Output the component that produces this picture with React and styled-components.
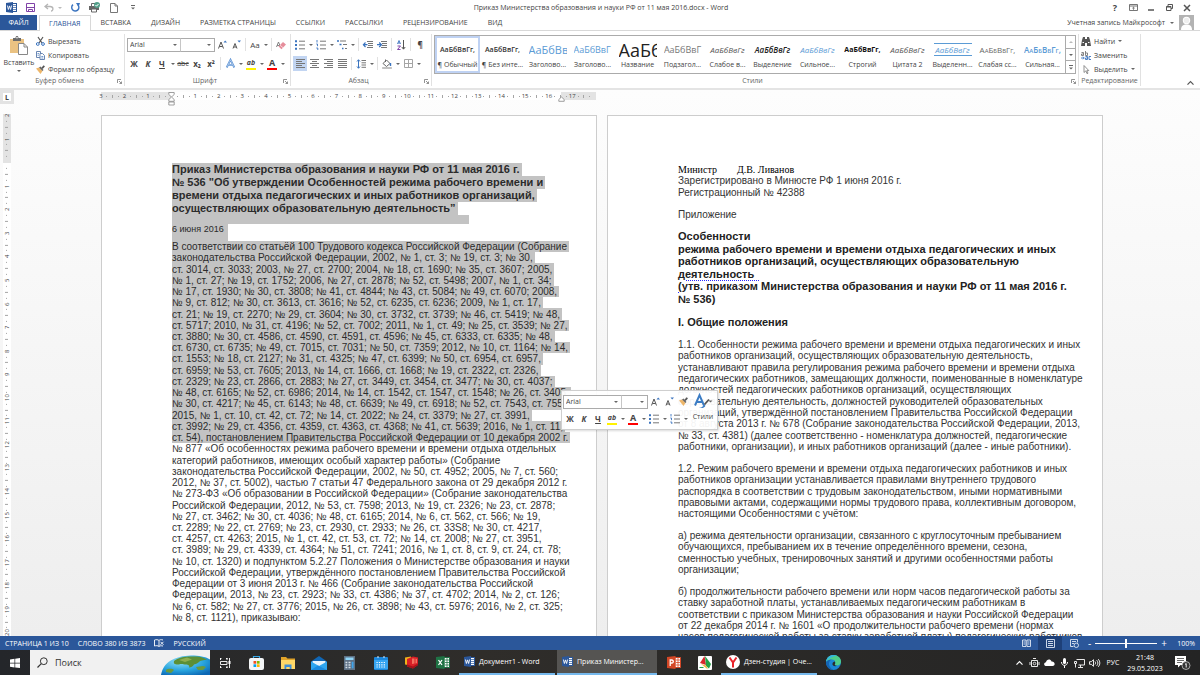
import React from 'react';
import styled, { createGlobalStyle, css } from 'styled-components';

const GlobalStyle = createGlobalStyle`
  * { box-sizing: border-box; }
  body {
    margin: 0;
    background: #fff;
    color: #444;
    font-family: "Open Sans", "Noto Sans", sans-serif;
    font-size: 7px;
  }
  button, input, select {
    font: inherit;
    color: inherit;
    border: 0;
    margin: 0;
    padding: 0;
    background: none;
  }
  svg { display: block; flex: none; overflow: visible; }
`

const Window = styled.div`
  display: flex;
  flex-direction: column;
  height: 100vh;
  overflow: hidden;
`

/* ---------- title bar and tabs ---------- */

const TitleBar = styled.header`
  display: grid;
  grid-template-columns: 1fr auto 1fr;
  align-items: center;
  height: 15px;
  padding: 0 4px 0 6px;
`
const QuickAccess = styled.div`
  display: flex;
  align-items: center;
  gap: 8px;
`
const QuickButton = styled.button`
  display: flex;
  align-items: center;
  justify-content: center;
  gap: 4px;
  min-width: 11px;
`
const Title = styled.h1`
  margin: 0;
  font-size: 7px;
  font-weight: 400;
  white-space: nowrap;
`
const WindowButtons = styled.div`
  display: flex;
  justify-content: flex-end;
`
const WindowButton = styled.button`
  display: flex;
  align-items: center;
  justify-content: center;
  width: 18px;
  height: 14px;
  font-size: 9px;
  font-weight: 700;
`
const TabBar = styled.nav`
  display: flex;
  align-items: stretch;
  height: 16px;
  border-bottom: 1px solid #d8d8d8;
`
const FileTab = styled.button`
  width: 37px;
  margin-right: 2px;
  background: #2b579a;
  color: #fff;
`
const Tab = styled.button`
  padding: 0 10px;
  white-space: nowrap;
  ${props => props.$active && css`
    margin-bottom: -1px;
    padding: 0 9px;
    border: 1px solid #d8d8d8;
    border-bottom: 0;
    background: #fff;
    color: #2b579a;
  `}
`
const Account = styled.button`
  display: flex;
  align-items: center;
  gap: 5px;
  margin-left: auto;
  padding-right: 6px;
  white-space: nowrap;
`

/* ---------- ribbon ---------- */

const Ribbon = styled.div`
  display: flex;
  flex: none;
  height: 59px;
  padding: 3px 0 2px;
  border-bottom: 2px solid #e4e4e4;
`
const Group = styled.section`
  display: flex;
  flex-direction: column;
  flex: ${props => props.$grow ? "1" : "none"};
  width: ${props => props.$width ? `${props.$width}px` : "auto"};
  min-width: 0;
  padding: 0 2px;
  border-right: 1px solid #e1e1e1;
`
const GroupBody = styled.div`
  display: flex;
  flex-direction: ${props => props.$column ? "column" : "row"};
  flex: 1;
  gap: ${props => props.$column ? "4px" : "0"};
  padding-top: ${props => props.$column ? "3px" : "0"};
`
const GroupFooter = styled.div`
  display: flex;
  align-items: center;
  height: 10px;
`
const GroupName = styled.h2`
  flex: 1;
  margin: 0;
  font-size: 7px;
  font-weight: 400;
  line-height: 10px;
  text-align: center;
  white-space: nowrap;
  color: #666;
`
const Paste = styled.button`
  display: flex;
  flex-direction: column;
  align-items: center;
  gap: 3px;
  width: 34px;
  padding-top: 2px;
`
const CommandList = styled.div`
  display: flex;
  flex-direction: column;
`
const Command = styled.button`
  display: flex;
  align-items: center;
  gap: 3px;
  height: 14px;
  white-space: nowrap;
`
const ToolRow = styled.div`
  display: flex;
  align-items: center;
  height: 15px;
`
const Tool = styled.button`
  display: flex;
  align-items: center;
  justify-content: center;
  width: 14px;
  height: 15px;
  font-size: ${props => props.$small ? 7 : 8}px;
  font-weight: ${props => props.$bold ? 700 : 400};
  font-style: ${props => props.$italic ? "italic" : "normal"};
  text-decoration: ${props => props.$underline ? "underline" : "none"};
  background: ${props => props.$active ? "#c2d5f2" : "none"};
`
const Drop = styled.button`
  display: flex;
  align-items: center;
  justify-content: center;
  width: 7px;
  height: 15px;
`
const Divider = styled.span`
  width: 1px;
  height: 13px;
  margin: 0 2px;
  background: #e1e1e1;
`
const Combo = styled.label`
  display: flex;
  align-items: center;
  width: ${props => props.$width}px;
  height: 14px;
  padding-right: 3px;
  border: 1px solid #ababab;
  background: #fff;
  & + & { border-left-color: #c6c6c6; margin-left: -1px; }
`
const Select = styled.select`
  flex: 1;
  min-width: 0;
  appearance: none;
  padding-left: 2px;
  outline: 0;
`

/* ---------- styles gallery ---------- */

const Gallery = styled.div`
  display: flex;
  flex: 1;
  height: 39px;
  min-width: 0;
  margin-top: 1px;
  border: 1px solid #ababab;
`
const StyleItem = styled.button`
  display: flex;
  flex-direction: column;
  flex: 1;
  min-width: 0;
  align-items: center;
  justify-content: flex-end;
  padding-bottom: 3px;
  overflow: hidden;
  outline: ${props => props.$active ? "2px solid #bfd2f3" : "0"};
  outline-offset: -2px;
`
const Sample = styled.span`
  display: flex;
  align-items: center;
  justify-content: ${props => props.$big ? "flex-start" : "center"};
  width: 38px;
  height: ${props => props.$lined ? "13px" : "19px"};
  margin-bottom: ${props => props.$lined ? "4px" : "1px"};
  overflow: hidden;
  white-space: nowrap;
  font-size: ${props => props.$size || 8}px;
  color: ${props => props.$color || "#555"};
  font-weight: ${props => props.$weight || 400};
  font-style: ${props => props.$italic ? "italic" : "normal"};
  font-variant: ${props => props.$caps ? "small-caps" : "normal"};
  border: solid #5b9bd5;
  border-width: ${props => props.$lined ? "1px 0" : "0"};
`
const StyleName = styled.span`
  white-space: nowrap;
  line-height: 10px;
`
const GalleryScroll = styled.div`
  display: flex;
  flex-direction: column;
  width: 10px;
  border-left: 1px solid #ababab;
  button {
    display: flex;
    flex: 1;
    align-items: center;
    justify-content: center;
  }
  button + button { border-top: 1px solid #ababab; }
`

/* ---------- document area ---------- */

const Canvas = styled.main`
  display: flex;
  flex-direction: column;
  flex: 1;
  min-height: 0;
  overflow: hidden;
  background: linear-gradient(#fdfdfd, #eeeeee);
`
const CanvasRow = styled.div`
  display: grid;
  grid-template-columns: 14px 1fr;
  flex: ${props => props.$grow ? "1" : "none"};
  min-height: 0;
`
const Sheets = styled.div`
  display: grid;
  grid-template-columns: 496px 496px;
  justify-content: center;
  gap: 10px;
  padding-right: 10px;
  padding-top: ${props => props.$top || 0}px;
`
const TabStop = styled.button`
  width: 14px;
  height: 14px;
  border: 3px solid #e3e3e3;
  background: #fff;
  font-size: 7px;
  line-height: 7px;
  font-weight: 700;
`
const HorizontalRuler = styled.div`
  position: relative;
  display: flex;
  width: 501px;
  height: 8px;
  margin: 2px 0 0 -3px;
  background: linear-gradient(90deg, #fdfdfd 3px, #e3e3e3 3px, #e3e3e3 73px, #fff 73px, #fff 463px, #e3e3e3 463px, #e3e3e3 498px, #fdfdfd 498px);
`
const VerticalRuler = styled.div`
  display: flex;
  flex-direction: column;
  width: 8px;
  height: 524px;
  margin: 8px 0 0 3px;
  background: linear-gradient(#fcfcfc 2px, #e3e3e3 2px, #e3e3e3 51px, #fff 51px);
`
const Mark = styled.span`
  display: flex;
  flex: 1 1 0;
  min-width: 0;
  min-height: 0;
  align-items: center;
  justify-content: center;
  font-size: 6px;
  line-height: 6px;
  color: #444;
  ${props => props.$vertical && css`
    writing-mode: vertical-rl;
    transform: rotate(180deg);
  `}
`
const Tick = styled.i`
  width: ${props => props.$wide ? 3 : 1}px;
  height: ${props => props.$tall ? 3 : 1}px;
  background: #a5a5a5;
`
const Indent = styled.span`
  position: absolute;
  top: 0;
  left: ${props => props.$at}px;
`
const Sheet = styled.article`
  position: relative;
  padding: ${props => props.$top}px 70px 0;
  border: 1px solid #cdcdcd;
  border-bottom: 0;
  background: #fff;
  color: #333;
  font-family: "Liberation Sans", Arial, sans-serif;
  font-size: 10px;
`
const Block = styled.div`
  display: flex;
  flex-direction: column;
  align-items: flex-start;
  height: ${props => props.$height}px;
  margin-bottom: ${props => props.$after || 0}px;
`
const Line = styled.span`
  display: flex;
  flex: 1 1 0;
  min-height: 0;
  align-items: center;
  white-space: pre;
  padding-right: 2px;
  background: ${props => props.$marked ? "#c3c3c3" : "none"};
  color: ${props => props.$marked ? "#2b2b2b" : "inherit"};
`
const Heading = styled(Block).attrs({ as: "h2" })`
  margin-top: 0;
  font-size: 11px;
  font-weight: 700;
  color: #222;
  ${Line} { padding-bottom: 2px; }
`
const HeadingTail = styled.span`
  width: 297px;
  height: 9px;
  background: #c3c3c3;
`
const Dated = styled(Block)`
  font-size: 9px;
  ${Line} { align-items: flex-start; }
`
const Signature = styled(Block)`
  font-family: "Liberation Serif", "Times New Roman", serif;
  color: #000;
`
const Grammar = styled.u`
  text-decoration: underline dotted #2a2aff 1px;
  text-underline-offset: 2px;
`

/* ---------- mini toolbar ---------- */

const MiniToolbar = styled.div`
  position: absolute;
  z-index: 3;
  top: 274px;
  left: 459px;
  display: flex;
  width: 157px;
  height: 40px;
  padding: 3px 1px;
  border: 1px solid #cfcfcf;
  background: rgba(255, 255, 255, 0.94);
  box-shadow: 1px 1px 2px rgba(0, 0, 0, 0.15);
  color: #444;
  font-family: "Open Sans", "Noto Sans", sans-serif;
  font-size: 7px;
`
const MiniTools = styled.div`
  display: flex;
  flex-direction: column;
  gap: 2px;
`
const MiniStyles = styled.button`
  display: flex;
  flex: 1;
  flex-direction: column;
  align-items: center;
  gap: 4px;
`

/* ---------- status bar ---------- */

const StatusBar = styled.footer`
  display: flex;
  flex: none;
  align-items: center;
  height: 14px;
  padding: 0 5px;
  background: #2b579a;
  color: #fff;
`
const StatusItem = styled.button`
  display: flex;
  align-items: center;
  margin-right: 9px;
`
const Views = styled.div`
  display: flex;
  align-self: stretch;
  margin-left: auto;
`
const View = styled.button`
  display: flex;
  align-items: center;
  justify-content: center;
  width: 24px;
  background: ${props => props.$active ? "#1e4078" : "none"};
`
const Zoom = styled.label`
  display: flex;
  align-items: center;
  gap: 4px;
  margin-left: 2px;
  font-size: 10px;
`
const ZoomSlider = styled.input`
  width: 62px;
  height: 12px;
  appearance: none;
  background: linear-gradient(#fff, #fff) center / 100% 1px no-repeat;
  &::-webkit-slider-thumb {
    appearance: none;
    width: 2px;
    height: 9px;
    background: #fff;
  }
`
const ZoomValue = styled.button`
  width: 28px;
  text-align: right;
`

/* ---------- taskbar ---------- */

const Taskbar = styled.div`
  display: flex;
  flex: none;
  align-items: stretch;
  height: 25px;
  background: linear-gradient(90deg, #24262a, #2f2d2a 40%, #242424);
  color: #fff;
`
const TaskIcon = styled.button`
  display: flex;
  align-items: center;
  justify-content: center;
  width: ${props => props.$width || 31}px;
`
const SearchBox = styled.label`
  display: flex;
  align-items: center;
  gap: 7px;
  width: 180px;
  padding-left: 7px;
  overflow: hidden;
  background: #f1f1f1;
  color: #333;
`
const SearchInput = styled.input`
  flex: 1;
  min-width: 0;
  outline: 0;
  font-size: 9px;
  &::placeholder { color: #333; opacity: 1; }
`
const TaskButton = styled.button`
  display: flex;
  align-items: center;
  gap: 4px;
  width: ${props => props.$active ? 100 : 96}px;
  margin: 0 1px;
  padding-left: 5px;
  white-space: nowrap;
  background: ${props => props.$active ? "#555452" : "none"};
  border-bottom: 2px solid #76b9ed;
`
const Tray = styled.div`
  display: flex;
  align-items: center;
  margin-left: auto;
`
const TrayItem = styled.button`
  display: flex;
  align-items: center;
  justify-content: center;
  width: ${props => props.$width || 15}px;
`
const Clock = styled.time`
  width: 42px;
  line-height: 11px;
  text-align: center;
`

/* ---------- icons ---------- */

const Svg = ({ w, h, children }) => (
  <svg width={w} height={h} viewBox={`0 0 ${w} ${h}`} fill="none" aria-hidden="true">{children}</svg>
)
const Caret = ({ color = "#666" }) => <Svg w={4} h={2}><path d="M0 0h4L2 2z" fill={color}/></Svg>

const WordIcon = () => (
  <Svg w={11} h={11}>
    <rect x="5.5" y="1.5" width="5" height="8" fill="#fff" stroke="#2b579a"/>
    <path d="M7 3.5h3M7 5.5h3M7 7.5h3" stroke="#2b579a" strokeWidth=".7"/>
    <path d="M0 1l7-1v11l-7-1z" fill="#2b579a"/>
    <path d="M1.4 3.5l1 4 1.1-3.6 1.1 3.6 1-4" stroke="#fff" strokeWidth=".9"/>
  </Svg>
)
const SaveIcon = () => (
  <Svg w={9} h={9}>
    <path d="M.5.5h8v8h-8z" stroke="#8043a8"/>
    <path d="M1 4.5h7" stroke="#8043a8"/>
    <path d="M2.5 9V6.5h4V9" stroke="#8043a8"/>
  </Svg>
)
const UndoIcon = () => (
  <Svg w={10} h={9}>
    <path d="M4 1L1 3.5 4 6M1 3.5h5c4 0 3.500 4.500 1 4.500" stroke="#b5b5b5" strokeWidth="1.300"/>
  </Svg>
)
const RedoIcon = () => (
  <Svg w={9} h={9}>
    <path d="M2 1.600A3.600 3.600 0 1 0 7 2" stroke="#3b74bf" strokeWidth="1.400"/>
    <path d="M5 0h4L7.500 4z" fill="#3b74bf"/>
  </Svg>
)
const PrintIcon = () => (
  <Svg w={11} h={11}>
    <path d="M0 4h10v4H0z" fill="#666"/>
    <path d="M2.500 4V1.500h4M2.500 7h5v3h-5z" stroke="#666" fill="#fff"/>
    <circle cx="8" cy="3" r="3" fill="#53a08a"/>
    <path d="M6.500 3l1 1.200L9.500 2" stroke="#fff"/>
  </Svg>
)
const BlankIcon = () => <Svg w={8} h={10}><path d="M.5.5h4.500l2.500 2.500v6.500h-7zM5 .5V3h2.500" stroke="#777"/></Svg>
const CustomizeIcon = () => <Svg w={4} h={5}><path d="M0 .5h4" stroke="#666"/><path d="M0 2.500h4L2 4.500z" fill="#666"/></Svg>
const RibbonOptionsIcon = () => (
  <Svg w={9} h={7}>
    <path d="M.5.5h8v6h-8zM.5 2h8" stroke="#666" strokeWidth=".9"/><path d="M4.500 5.800V3.200M3.300 4.300l1.200-1.100 1.200 1.100" stroke="#666" strokeWidth=".8"/>
  </Svg>
)
const MinimizeIcon = () => <Svg w={6} h={6}><path d="M0 5h6" stroke="#555" strokeWidth="1.500"/></Svg>
const RestoreIcon = () => <Svg w={7} h={7}><path d="M.5 2.500h4.500v4h-4.500zM2 2.500v-2h4.500v4H5M.5 3h4.500" stroke="#555"/></Svg>
const CloseIcon = () => <Svg w={6} h={6}><path d="M0 0l6 6M6 0L0 6" stroke="#555" strokeWidth="1.500"/></Svg>
const AvatarIcon = () => (
  <Svg w={15} h={15}>
    <path d="M0 0h15v15H0z" fill="#b3b3b3"/>
    <circle cx="7.500" cy="5.500" r="3.700" fill="#fff"/>
    <path d="M2 15c0-4 2-5.500 5.500-5.500S13 11 13 15z" fill="#fff"/>
    <circle cx="7.500" cy="5.500" r="2.700" fill="#efefef"/>
  </Svg>
)
const LauncherIcon = () => (
  <Svg w={5} h={5}><path d="M.5 4V.5H4M2 2l2.500 2.500M4.500 2.500v2h-2" stroke="#777" strokeWidth=".8"/></Svg>
)
const PasteIcon = () => (
  <Svg w={18} h={19}>
    <path d="M0 3h14v14H0z" fill="#eac282"/>
    <path d="M3 2h2.500c0-2.600 3-2.600 3 0H11v3H3z" fill="#6b6b6b"/>
    <circle cx="7" cy="1.800" r=".8" fill="#fff"/>
    <path d="M8.500 7.500h5.500l3.500 3.500v7.500h-9z" fill="#fff" stroke="#888"/>
    <path d="M14 7.500V11h3.500" stroke="#888"/>
  </Svg>
)
const CutIcon = () => (
  <Svg w={9} h={9}>
    <path d="M2 0l4 6M7 0L3 6" stroke="#555" strokeWidth="1.200"/>
    <circle cx="1.800" cy="7" r="1.400" stroke="#3b74bf"/>
    <circle cx="7" cy="7" r="1.400" stroke="#3b74bf"/>
  </Svg>
)
const CopyIcon = () => (
  <Svg w={9} h={9}>
    <path d="M.5.5h4v6h-4z" stroke="#6a87b3" fill="#fff"/>
    <path d="M4 2.500h2.500l2 2v4H4z" stroke="#6a87b3" fill="#fff"/>
    <path d="M5.300 5.500h2M5.300 7h2M1.500 2.500h1.500M1.500 4.200h1.500" stroke="#3b74bf" strokeWidth=".7"/>
  </Svg>
)
const BrushIcon = () => (
  <Svg w={9} h={9}>
    <path d="M0 3.500l3-1L6.500 6l-2 3z" fill="#eeb76a"/>
    <path d="M3 2.500l3.500 3.500 1-1L4.500 1.500z" fill="#666"/>
    <path d="M6 3.300L8.300 0.800" stroke="#555" strokeWidth="1.700"/>
  </Svg>
)
const GrowIcon = ({ down }) => (
  <Svg w={9} h={9}>
    <path d={down ? "M1 8.500l2-5 2 5M1.700 7h2.600" : "M.5 8.500L3 2l2.500 6.500M1.500 6.500h3"} stroke="#555"/>
    <path d={down ? "M5.500 .5h3.500L7.200 2.500z" : "M5.500 2.500h3.500L7.200 .5z"} fill="#3b74bf"/>
  </Svg>
)
const EraserIcon = () => (
  <Svg w={10} h={10}>
    <path d="M.5 7l2-5 2 5M1.200 5.500h2.500" stroke="#777" strokeWidth=".9"/>
    <path d="M2.500 6.500L7 2l3 2.500L5.500 9.300z" fill="#e68d9b"/>
    <path d="M4 5.200l3 2.500" stroke="#fff" strokeWidth=".6"/>
  </Svg>
)
const EffectIcon = () => (
  <Svg w={9} h={9}>
    <path d="M.7 8.500L4.500.7l3.800 7.800M2.300 5.800h4.400" stroke="#4a86cf" strokeWidth="1.800"/>
    <path d="M.7 8.500L4.500.7l3.800 7.800M2.300 5.800h4.400" stroke="#fff" strokeWidth=".5"/>
  </Svg>
)
const StylesIcon = () => (
  <Svg w={18} h={14}>
    <path d="M1 11.500L5.500 1.200l4.500 10.300M2.700 8h5.600" stroke="#3b7cc4" strokeWidth="2"/>
    <path d="M5 13.500c2 .5 4-.5 5-3l1.500 1.200c-1 2-4 3-6.500 1.800z" fill="#3b7cc4"/>
    <path d="M10.500 10.500l4.500-5" stroke="#555" strokeWidth="1.800"/>
    <path d="M14.500 6.500h4l-2 2z" fill="#666"/>
  </Svg>
)
const Bar = styled.span`
  display: flex;
  align-items: flex-end;
  justify-content: center;
  width: 10px;
  height: 12px;
  line-height: 9px;
  padding-bottom: 1px;
  border-bottom: 2px solid ${props => props.color};
  font-size: ${props => props.$small ? 7 : 9}px;
  font-style: ${props => props.$small ? "italic" : "normal"};
  font-weight: 700;
`
const ListIcon = ({ kind }) => (
  <Svg w={10} h={10}>
    {kind === "multi"
      ? <path d="M0 1h2M2.500 4.500h2M5 8.500h1.500" stroke="#3b74bf" strokeWidth="1.500"/>
      : kind === "number"
        ? <path d="M1 0v2.500M.3 4h1.200v2.200M.3 8h1.500v2" stroke="#3b74bf" strokeWidth=".9"/>
        : <path d="M0 1.200h2M0 5h2M0 8.800h2" stroke="#3b74bf" strokeWidth="2"/>}
    <path d={kind === "multi" ? "M3 1h6M6 4.500h4M8 8.500h2" : "M4 1.200h6M4 5h6M4 8.800h6"} stroke="#777"/>
  </Svg>
)
const IndentIcon = ({ right }) => (
  <Svg w={10} h={8}>
    <path d="M4 .5h6M5 2.500h5M5 4.500h5M4 6.500h6" stroke="#777"/>
    <path d={right ? "M0 3.700h4M2.200 1.500L4.500 3.700 2.200 6" : "M.5 3.700h4M2.500 1.500L.4 3.700 2.500 6"} stroke="#3b74bf" strokeWidth="1.200"/>
  </Svg>
)
const SortIcon = () => (
  <Svg w={9} h={10}>
    <path d="M.5 4L2 .5 3.500 4M1 3h2" stroke="#3b74bf" strokeWidth=".9"/>
    <path d="M.5 6h3l-3 3.500h3" stroke="#8043a8"/>
    <path d="M6.500 0v9M4.800 7l1.700 2.200L8.200 7" stroke="#555"/>
  </Svg>
)
const AlignIcon = ({ d }) => <Svg w={9} h={9}><path d={d} stroke="#777"/></Svg>
const SpacingIcon = () => (
  <Svg w={9} h={10}>
    <path d="M1.500 1v8M0 2.500L1.500.7 3 2.500M0 7.500l1.500 1.800L3 7.500" stroke="#3b74bf"/>
    <path d="M4.500 1.500H9M4.500 3.800H9M4.500 6H9M4.500 8.300H9" stroke="#777"/>
  </Svg>
)
const BucketIcon = () => (
  <Svg w={10} h={10}>
    <path d="M1 4.500L4.500 1l3.500 3.500L4.500 7.500zM3.500 3V.5" stroke="#666"/>
    <path d="M8.500 4v3" stroke="#3b74bf" strokeWidth="1.400"/>
    <path d="M.5 8.500h9v1h-9z" fill="#fff" stroke="#999" strokeWidth=".6"/>
  </Svg>
)
const BordersIcon = () => <Svg w={9} h={9}><path d="M.5.5h8v8h-8zM4.500.5v8M.5 4.500h8" stroke="#a5a5a5"/></Svg>
const FindIcon = () => (
  <Svg w={10} h={9}>
    <path d="M2 0h2v2h2V0h2l1 3 1 6H6V6H4v3H0l1-6z" fill="#555"/><path d="M1.500 5.500h1.500M7 5.500h1.500" stroke="#fff"/>
  </Svg>
)
const ReplaceIcon = () => (
  <Svg w={10} h={9}>
    <path d="M.5 1.500h2v3h-2V3h2M4.500 0v4.500h2v-2.500h-2" stroke="#777" strokeWidth=".9"/>
    <path d="M0 7h3M2 5.700L3.300 7 2 8.300M4.500 5.500h2v3h-2V7h2M10 5.500H8v3h2" stroke="#3b74bf" strokeWidth=".9"/>
  </Svg>
)
const CursorIcon = () => <Svg w={10} h={9}><path d="M3 .5v7l1.800-1.600L6 8.700l1-.5-1.200-2.600h2z" stroke="#777" strokeWidth=".8"/></Svg>
const IndentMarker = ({ bottom }) => (
  <Svg w={7} h={14}>
    {!bottom && <path d="M.8.5h5.400v2L3.500 5 .8 2.500z" fill="#fff" stroke="#888" strokeWidth=".8"/>}
    <path d="M3.500 5L6.200 7.500v1.800H.8V7.500z" fill="#fff" stroke="#888" strokeWidth=".8"/>
    {!bottom && <path d="M.8 10h5.400v3H.8z" fill="#fff" stroke="#888" strokeWidth=".8"/>}
  </Svg>
)
const ProofIcon = () => (
  <Svg w={10} h={8}>
    <path d="M5 1.500C4 .5 2 .5.5 1v6c1.500-.5 3.500-.5 4.500.5V1.500zM5 1.500C6 .5 7 .5 9 1M5 7.500c1-.8 2-.9 4-.5" stroke="#fff" strokeWidth=".9"/>
    <path d="M6.500 2.800l3 3M9.500 2.800l-3 3" stroke="#fff" strokeWidth=".9"/>
  </Svg>
)
const ReadIcon = () => (
  <Svg w={9} h={8}><path d="M.5 1h3.500v6.500H.5zM5 1h3.500v6.500H5zM1.500 3h1.500M1.500 5h1.500M6 3h1.500M6 5h1.500" stroke="#dfe7f3" strokeWidth=".9"/></Svg>
)
const PrintViewIcon = () => <Svg w={9} h={9}><path d="M.5.5h8v8h-8z" stroke="#c9d5e8"/><path d="M2 2.500h5M2 4.500h5M2 6.500h5" stroke="#c9d5e8"/></Svg>
const WebViewIcon = () => (
  <Svg w={9} h={9}>
    <path d="M.5.5h7v3M.5.5v7h3M2 2.500h4M2 4.500h2" stroke="#dfe7f3" strokeWidth=".9"/><circle cx="6.300" cy="6.300" r="2.200" stroke="#dfe7f3" strokeWidth=".9"/>
  </Svg>
)
const StartIcon = () => (
  <Svg w={10} h={10}><path d="M0 1.500l4.500-.7v4H0zM5.200.7L10 0v4.800H5.200zM0 5.400h4.500v4L0 8.800zM5.200 5.400H10V10l-4.800-.6z" fill="#fff"/></Svg>
)
const SearchIcon = () => <Svg w={11} h={11}><circle cx="6.800" cy="4.200" r="3.400" stroke="#333"/><path d="M4.300 6.700L.5 10.500" stroke="#333" strokeWidth="1.200"/></Svg>
const GlobeIcon = () => (
  <Svg w={49} h={25}>
    <defs>
      <radialGradient id="sea" cx=".4" cy=".3" r=".8"><stop offset="0" stopColor="#8fe0f7"/><stop offset=".6" stopColor="#27a3dd"/><stop offset="1" stopColor="#0c67b4"/></radialGradient>
    </defs>
    <path d="M0 25C2 12 14 6 30 5.500c8 0 14 1 19 4V25z" fill="url(#sea)"/>
    <path d="M13 11c4-4 13-5 21-4.500 6 0 9 1.500 12 3l-5 1c-3 0-3 3-8 4-1 2-3 3-5 3 1-2-1-3-3-3-3 0-4-1-7 0-3 0-6 0-5-3.500z" fill="#5c8f35"/>
    <path d="M18 10l8-2.500 5 2-7 2.500z" fill="#8fae4e"/>
    <path d="M5 20c3-2 7-1 8 0l-3 3-5-1zM35 17l7-1 3 1-3 3-5 0z" fill="#6a9a3e"/>
  </Svg>
)
const TaskViewIcon = () => (
  <Svg w={11} h={10}><path d="M0 .5h1.500M6 .5h1.500M0 9.500h1.500M6 9.500h1.500M.5 0v2M7 0v2M.5 8v2M7 8v2M.5 3.500H7v3H.5zM9.500 0v10" stroke="#fff" strokeWidth=".9"/><path d="M8.500 3h2v3h-2z" fill="#fff"/></Svg>
)
const StoreIcon = () => (
  <Svg w={15} h={15}>
    <path d="M4.500 4V1.500h6V4" stroke="#39a7e6" strokeWidth="1.200"/>
    <rect x="0" y="3" width="15" height="12" rx="2" fill="#f4f6f8"/>
    <path d="M4.500 6h2.700v2.700H4.500z" fill="#f25022"/><path d="M7.900 6h2.700v2.700H7.900z" fill="#7fba00"/>
    <path d="M4.500 9.300h2.700V12H4.500z" fill="#00a4ef"/><path d="M7.900 9.300h2.700V12H7.900z" fill="#ffb900"/>
  </Svg>
)
const FolderIcon = () => (
  <Svg w={14} h={12}>
    <path d="M0 0h5l1.500 1.500H14V11H0z" fill="#e0a32a"/><path d="M0 3h14v9H0z" fill="#ffd868"/><path d="M3.500 12V7.500h7V12H8.700v-2H5.300v2z" fill="#3f8fd6"/>
  </Svg>
)
const MailIcon = () => (
  <Svg w={16} h={14}>
    <path d="M0 5.500L8 0l8 5.500V14H0z" fill="#1066b5"/><path d="M1.500 5h13v6h-13z" fill="#e8f4fd"/><path d="M0 5.500l8 4.500 8-4.500V14H0z" fill="#2fa6f0"/><path d="M0 14l7-4.500L16 14z" fill="#1b8ae0"/>
  </Svg>
)
const CalcIcon = () => (
  <Svg w={11} h={14}>
    <path d="M0 0h11v14H0z" fill="#5e7185"/><path d="M1.500 1.500h8V4h-8z" fill="#8fd4f7"/>
    <path d="M1.500 6.500h1.800M4.500 6.500h2M1.500 9h1.800M4.500 9h2M1.500 11.500h1.800M4.500 11.500h2" stroke="#d7e0e8" strokeWidth="1.500"/><path d="M7.700 5.800h1.800v6.500H7.700z" fill="#3ea4ea"/>
  </Svg>
)
const CalendarIcon = () => (
  <Svg w={14} h={14}>
    <rect y="1" width="14" height="13" rx="1" fill="#1c87dc"/><path d="M0 4h14v9H0z" fill="#36a5f2"/>
    <path d="M2.500 6.500h9M2.500 8.800h9M2.500 11h9" stroke="#fff" strokeWidth="1.200" strokeDasharray="1.200 1.200"/><path d="M4 0v2M10 0v2" stroke="#dbeefc"/>
  </Svg>
)
const GiftIcon = () => (
  <Svg w={13} h={13}>
    <path d="M0 1.500L6 .5v9l-6-1z" fill="#f0b21b"/><path d="M2 3l6-2.500 5 1V9l-5 3.500-6-2z" fill="#d81f26"/><path d="M7 2.500h2.500v5L7 8zM10.500 2.500l1.500.5v4l-1.500.5z" fill="#f2705f"/><path d="M2 8.500l6 2 5-3V9l-5 3.500-6-2z" fill="#a3141b"/>
  </Svg>
)
const OfficeIcon = ({ color, glyph }) => (
  <Svg w={14} h={13}>
    <path d="M8 1.500h5.500v10H8z" fill="#fff" stroke={color}/><path d="M9 4h4M9 6.500h4M9 9h4M11 2v9" stroke={color} strokeWidth=".8"/>
    <path d="M0 1l8.500-1v13L0 12z" fill={color}/><path d={glyph} stroke="#fff" strokeWidth="1.300"/>
  </Svg>
)
const LeafIcon = () => (
  <Svg w={14} h={14}>
    <rect width="14" height="14" rx="1" fill="#fff"/><path d="M6.500 0L8 9 2 7z" fill="#d9252b"/><path d="M7 0l6 8-2 4.500L8 10z" fill="#23a046"/><path d="M3 8l5 1.500 2 4z" fill="#f2b63a"/><path d="M1.500 11.500h4" stroke="#23a046"/>
  </Svg>
)
const YandexIcon = () => (
  <Svg w={14} h={14}><circle cx="7" cy="7" r="7" fill="#fff"/><path d="M3.500 2.500L7 7.500l3.500-5M7 7.500v5" stroke="#e8242a" strokeWidth="2"/></Svg>
)
const EdgeIcon = () => (
  <Svg w={15} h={15}>
    <circle cx="7.500" cy="7.500" r="7.500" fill="#1b86d6"/>
    <path d="M0 7C.5 2.500 4 0 7.500 0 12 0 15 3 15 6.500 15 9 13 10.500 11 10.500c-2 0-2.500-.8-2-1.500.8-1.200.3-4.500-3-4.500C3 4.500 1 5.500 0 7z" fill="#4ecf8b"/>
    <path d="M0 7C.5 2.500 4 0 7.500 0 9 0 10 .3 11 .8 7 1 3 3 0 7z" fill="#35b8e0"/>
    <path d="M0 7c1-1.500 3-2.500 6-2.500-3 1-3.500 4-2.500 6.500.7 2 2.300 3.300 4 4C3 15 0 11.500 0 7z" fill="#1464b4"/>
    <path d="M8.800 6.500c.6 1 .5 1.900.1 2.600-.6 1.100.6 1.800 2.100 1.500-1.500 1.500-5 .5-4.500-2 .2-1.200 1.200-2 2.300-2.100z" fill="#2b2b2b"/>
  </Svg>
)
const ChevronUpIcon = ({ color = "#fff" }) => <Svg w={7} h={4}><path d="M.5 3.700l3-3 3 3" stroke={color} strokeWidth="1.200"/></Svg>
const MeetIcon = () => <Svg w={9} h={9}><path d="M1.500 2.500h6v6h-6zM3 .5h3M0 4v3M9 4v3" stroke="#fff" strokeWidth=".9"/><circle cx="4.500" cy="5.500" r="1.300" stroke="#fff" strokeWidth=".8"/></Svg>
const CloudIcon = () => <Svg w={11} h={7}><path d="M2.500 7C-.5 7-.5 3.500 2 3.200 2.500 0 6.500-.5 7.500 2.500 11 2 12 7 8.500 7z" fill="#fff"/></Svg>
const MicIcon = () => <Svg w={7} h={10}><rect x="2" width="3" height="6" rx="1.500" fill="#fff"/><path d="M.5 4c0 4.500 6 4.500 6 0M3.500 7.500V10" stroke="#fff"/></Svg>
const NetIcon = () => <Svg w={11} h={10}><path d="M2.500 1.500h8v5.500h-6M6.500 7v2M4 9.500h5M.5 3.500h2v2h-2zM1.500 5.500v4" stroke="#fff" strokeWidth=".9"/></Svg>
const VolumeIcon = () => <Svg w={11} h={8}><path d="M.5 2.700h1.800L4.500.7v6.600l-2.200-2H.5zM6 2.500c.8 1 .8 2 0 3M7.700 1.200c1.600 1.700 1.600 4 0 5.600M9.300.2c2 2.500 2 5.200 0 7.600" stroke="#fff" strokeWidth=".9"/></Svg>
const NoticeIcon = () => (
  <Svg w={16} h={14}>
    <path d="M0 0h11v9H5.500L3 11.500V9H0z" fill="#fff"/><path d="M2 2.500h7M2 4.500h7M2 6.500h5" stroke="#444" strokeWidth=".8"/>
    <circle cx="11" cy="9.500" r="4" fill="#333" stroke="#ddd" strokeWidth=".7"/><path d="M10 8.500l1.200-1v4" stroke="#fff" strokeWidth=".9"/>
  </Svg>
)

/* ---------- data ---------- */

const TABS = ["ГЛАВНАЯ", "ВСТАВКА", "ДИЗАЙН", "РАЗМЕТКА СТРАНИЦЫ", "ССЫЛКИ", "РАССЫЛКИ", "РЕЦЕНЗИРОВАНИЕ", "ВИД"]

const STYLES = [
  { name: "¶ Обычный", text: "АаБбВвГг,", weight: 600, color: "#333", size: 7 },
  { name: "¶ Без инте...", text: "АаБбВвГг,", weight: 600, color: "#333", size: 7 },
  { name: "Заголово...", text: "АаБбВв", color: "#5b9bd5", size: 11, big: true },
  { name: "Заголово...", text: "АаБбВвГ", color: "#5b9bd5", size: 9, big: true },
  { name: "Название", text: "АаБб", color: "#222", size: 18, big: true },
  { name: "Подзагол...", text: "АаБбВвГ", color: "#777", size: 9 },
  { name: "Слабое в...", text: "АаБбВвГг", italic: true, size: 8 },
  { name: "Выделение", text: "АаБбВвГг", italic: true, weight: 600, color: "#222", size: 8 },
  { name: "Сильное...", text: "АаБбВвГг", italic: true, color: "#5b9bd5", size: 8 },
  { name: "Строгий", text: "АаБбВвГг,", weight: 700, color: "#111", size: 7 },
  { name: "Цитата 2", text: "АаБбВвГг", italic: true, size: 8 },
  { name: "Выделенн...", text: "АаБбВвГг", italic: true, color: "#5b9bd5", lined: true, size: 8 },
  { name: "Слабая сс...", text: "АаБбВвГг,", caps: true, color: "#666", size: 8 },
  { name: "Сильная...", text: "АаБбВвГг,", caps: true, weight: 600, color: "#5b9bd5", size: 8 },
]

const ORDER_TITLE = [
  "Приказ Министерства образования и науки РФ от 11 мая 2016 г.",
  "№ 536 \"Об утверждении Особенностей режима рабочего времени и",
  "времени отдыха педагогических и иных работников организаций,",
  "осуществляющих образовательную деятельность”",
]

const ORDER_SELECTED = [
  "В соответствии со статьёй 100 Трудового кодекса Российской Федерации (Собрание",
  "законодательства Российской Федерации, 2002, № 1, ст. 3; № 19, ст. 3; № 30,",
  "ст. 3014, ст. 3033; 2003, № 27, ст. 2700; 2004, № 18, ст. 1690; № 35, ст. 3607; 2005,",
  "№ 1, ст. 27; № 19, ст. 1752; 2006, № 27, ст. 2878; № 52, ст. 5498; 2007, № 1, ст. 34;",
  "№ 17, ст. 1930; № 30, ст. 3808; № 41, ст. 4844; № 43, ст. 5084; № 49, ст. 6070; 2008,",
  "№ 9, ст. 812; № 30, ст. 3613, ст. 3616; № 52, ст. 6235, ст. 6236; 2009, № 1, ст. 17,",
  "ст. 21; № 19, ст. 2270; № 29, ст. 3604; № 30, ст. 3732, ст. 3739; № 46, ст. 5419; № 48,",
  "ст. 5717; 2010, № 31, ст. 4196; № 52, ст. 7002; 2011, № 1, ст. 49; № 25, ст. 3539; № 27,",
  "ст. 3880; № 30, ст. 4586, ст. 4590, ст. 4591, ст. 4596; № 45, ст. 6333, ст. 6335; № 48,",
  "ст. 6730, ст. 6735; № 49, ст. 7015, ст. 7031; № 50, ст. 7359; 2012, № 10, ст. 1164; № 14,",
  "ст. 1553; № 18, ст. 2127; № 31, ст. 4325; № 47, ст. 6399; № 50, ст. 6954, ст. 6957,",
  "ст. 6959; № 53, ст. 7605; 2013, № 14, ст. 1666, ст. 1668; № 19, ст. 2322, ст. 2326,",
  "ст. 2329; № 23, ст. 2866, ст. 2883; № 27, ст. 3449, ст. 3454, ст. 3477; № 30, ст. 4037;",
  "№ 48, ст. 6165; № 52, ст. 6986; 2014, № 14, ст. 1542, ст. 1547, ст. 1548; № 26, ст. 3405;",
  "№ 30, ст. 4217; № 45, ст. 6143; № 48, ст. 6639; № 49, ст. 6918; № 52, ст. 7543, ст. 7554;",
  "2015, № 1, ст. 10, ст. 42, ст. 72; № 14, ст. 2022; № 24, ст. 3379; № 27, ст. 3991,",
  "ст. 3992; № 29, ст. 4356, ст. 4359, ст. 4363, ст. 4368; № 41, ст. 5639; 2016, № 1, ст. 11,",
  "ст. 54), постановлением Правительства Российской Федерации от 10 декабря 2002 г.",
]

const ORDER_REST = [
  "№ 877 «Об особенностях режима рабочего времени и времени отдыха отдельных",
  "категорий работников, имеющих особый характер работы» (Собрание",
  "законодательства Российской Федерации, 2002, № 50, ст. 4952; 2005, № 7, ст. 560;",
  "2012, № 37, ст. 5002), частью 7 статьи 47 Федерального закона от 29 декабря 2012 г.",
  "№ 273-ФЗ «Об образовании в Российской Федерации» (Собрание законодательства",
  "Российской Федерации, 2012, № 53, ст. 7598; 2013, № 19, ст. 2326; № 23, ст. 2878;",
  "№ 27, ст. 3462; № 30, ст. 4036; № 48, ст. 6165; 2014, № 6, ст. 562, ст. 566; № 19,",
  "ст. 2289; № 22, ст. 2769; № 23, ст. 2930, ст. 2933; № 26, ст. 33S8; № 30, ст. 4217,",
  "ст. 4257, ст. 4263; 2015, № 1, ст. 42, ст. 53, ст. 72; № 14, ст. 2008; № 27, ст. 3951,",
  "ст. 3989; № 29, ст. 4339, ст. 4364; № 51, ст. 7241; 2016, № 1, ст. 8, ст. 9, ст. 24, ст. 78;",
  "№ 10, ст. 1320) и подпунктом 5.2.27 Положения о Министерстве образования и науки",
  "Российской Федерации, утверждённого постановлением Правительства Российской",
  "Федерации от 3 июня 2013 г. № 466 (Собрание законодательства Российской",
  "Федерации, 2013, № 23, ст. 2923; № 33, ст. 4386; № 37, ст. 4702; 2014, № 2, ст. 126;",
  "№ 6, ст. 582; № 27, ст. 3776; 2015, № 26, ст. 3898; № 43, ст. 5976; 2016, № 2, ст. 325;",
  "№ 8, ст. 1121), приказываю:",
]

const RULES = [
  { height: 113, lines: [
    "1.1. Особенности режима рабочего времени и времени отдыха педагогических и иных",
    "работников организаций, осуществляющих образовательную деятельность,",
    "устанавливают правила регулирования режима рабочего времени и времени отдыха",
    "педагогических работников, замещающих должности, поименованные в номенклатуре",
    "должностей педагогических работников организаций, осуществляющих",
    "образовательную деятельность, должностей руководителей образовательных",
    "организаций, утверждённой постановлением Правительства Российской Федерации",
    "от 8 августа 2013 г. № 678 (Собрание законодательства Российской Федерации, 2013,",
    "№ 33, ст. 4381) (далее соответственно - номенклатура должностей, педагогические",
    "работники, организации), и иных работников организаций (далее - иные работники).",
  ] },
  { height: 56, lines: [
    "1.2. Режим рабочего времени и времени отдыха педагогических работников и иных",
    "работников организации устанавливается правилами внутреннего трудового",
    "распорядка в соответствии с трудовым законодательством, иными нормативными",
    "правовыми актами, содержащими нормы трудового права, коллективным договором,",
    "настоящими Особенностями с учётом:",
  ] },
  { height: 45, lines: [
    "а) режима деятельности организации, связанного с круглосуточным пребыванием",
    "обучающихся, пребыванием их в течение определённого времени, сезона,",
    "сменностью учебных, тренировочных занятий и другими особенностями работы",
    "организации;",
  ] },
  { height: 56, lines: [
    "б) продолжительности рабочего времени или норм часов педагогической работы за",
    "ставку заработной платы, устанавливаемых педагогическим работникам в",
    "соответствии с приказом Министерства образования и науки Российской Федерации",
    "от 22 декабря 2014 г. № 1601 «О продолжительности рабочего времени (нормах",
    "часов педагогической работы за ставку заработной платы) педагогических работников",
  ] },
]

const ALIGN = [
  "M0 .5h9M0 2.500h6M0 4.500h9M0 6.500h6M0 8.500h9",
  "M0 .5h9M2 2.500h5M0 4.500h9M2 6.500h5M0 8.500h9",
  "M0 .5h9M3 2.500h6M0 4.500h9M3 6.500h6M0 8.500h9",
  "M0 .5h9M0 2.500h9M0 4.500h9M0 6.500h9M0 8.500h9",
]

/* ---------- parts ---------- */

// four marks per centimetre: number, dot, half tick, dot
const rulerMarks = (before, after, vertical) => {
  const marks = []
  for (let i = -before * 4; i <= after * 4; i++) {
    const quarter = Math.abs(i) % 4
    const cm = Math.abs(i) / 4
    marks.push(
      <Mark key={i} $vertical={vertical}>
        {quarter === 0
          ? (cm === 0 || cm === 18 && !vertical ? null : cm)
          : <Tick $tall={!vertical && quarter === 2} $wide={vertical && quarter === 2}/>}
      </Mark>
    )
  }
  return marks
}

const DropButton = ({ label }) => <Drop aria-label={label}><Caret/></Drop>

const FontPicker = ({ width, sizeWidth }) => (
  <>
    <Combo $width={width}>
      <Select aria-label="Шрифт" defaultValue="Arial"><option>Arial</option></Select>
      <Caret/>
    </Combo>
    <Combo $width={sizeWidth}>
      <Select aria-label="Размер шрифта" defaultValue=""><option value=""></option><option>12</option></Select>
      <Caret/>
    </Combo>
  </>
)

const Footer = ({ name, plain }) => (
  <GroupFooter>
    <GroupName>{name}</GroupName>
    {!plain && <button aria-label={`${name}: параметры`}><LauncherIcon/></button>}
  </GroupFooter>
)

const ClipboardGroup = () => (
  <Group $width={125}>
    <GroupBody>
      <Paste><PasteIcon/>Вставить<Caret/></Paste>
      <CommandList>
        <Command><CutIcon/>Вырезать</Command>
        <Command><CopyIcon/>Копировать</Command>
        <Command><BrushIcon/>Формат по образцу</Command>
      </CommandList>
    </GroupBody>
    <Footer name="Буфер обмена"/>
  </Group>
)

const FontGroup = () => (
  <Group $width={166}>
    <GroupBody $column>
      <ToolRow>
        <FontPicker width={54} sizeWidth={35}/>
        <Tool aria-label="Увеличить"><GrowIcon/></Tool>
        <Tool aria-label="Уменьшить"><GrowIcon down/></Tool>
        <Divider/>
        <Tool>Aa</Tool><DropButton label="Регистр"/>
        <Divider/>
        <Tool aria-label="Очистить формат"><EraserIcon/></Tool>
      </ToolRow>
      <ToolRow>
        <Tool $bold>Ж</Tool>
        <Tool $bold $italic>К</Tool>
        <Tool $bold $underline>Ч</Tool>
        <DropButton label="Подчёркивание"/>
        <Tool $small><s>abc</s></Tool>
        <Tool $bold>x₂</Tool>
        <Tool $bold>x²</Tool>
        <Divider/>
        <Tool aria-label="Эффекты"><EffectIcon/></Tool><DropButton label="Эффекты текста"/>
        <Tool><Bar color="#fff200" $small>ab</Bar></Tool><DropButton label="Цвет выделения"/>
        <Tool><Bar color="#f00">А</Bar></Tool><DropButton label="Цвет текста"/>
      </ToolRow>
    </GroupBody>
    <Footer name="Шрифт"/>
  </Group>
)

const ParagraphGroup = () => (
  <Group $width={141}>
    <GroupBody $column>
      <ToolRow>
        <Tool aria-label="Маркеры"><ListIcon/></Tool><DropButton label="Вид маркеров"/>
        <Tool aria-label="Нумерация"><ListIcon kind="number"/></Tool><DropButton label="Вид нумерации"/>
        <Tool aria-label="Многоуровневый список"><ListIcon kind="multi"/></Tool><DropButton label="Вид списка"/>
        <Divider/>
        <Tool aria-label="Уменьшить отступ"><IndentIcon/></Tool>
        <Tool aria-label="Увеличить отступ"><IndentIcon right/></Tool>
        <Divider/>
        <Tool aria-label="Сортировка"><SortIcon/></Tool>
        <Divider/>
        <Tool $bold>¶</Tool>
      </ToolRow>
      <ToolRow>
        {ALIGN.map((d, i) => <Tool key={d} $active={i === 0} aria-label="Выравнивание"><AlignIcon d={d}/></Tool>)}
        <Divider/>
        <Tool aria-label="Интервал"><SpacingIcon/></Tool><DropButton label="Вид интервала"/>
        <Divider/>
        <Tool aria-label="Заливка"><BucketIcon/></Tool><DropButton label="Цвет заливки"/>
        <Tool aria-label="Границы"><BordersIcon/></Tool><DropButton label="Вид границ"/>
      </ToolRow>
    </GroupBody>
    <Footer name="Абзац"/>
  </Group>
)

const StylesGroup = () => (
  <Group $grow>
    <GroupBody>
      <Gallery>
        {STYLES.map((s, i) => (
          <StyleItem key={i} $active={i === 0}>
            <Sample $size={s.size} $color={s.color} $weight={s.weight} $italic={s.italic} $caps={s.caps} $big={s.big} $lined={s.lined}>
              {s.text}
            </Sample>
            <StyleName>{s.name}</StyleName>
          </StyleItem>
        ))}
        <GalleryScroll>
          <button aria-label="Вверх"><Svg w={4} h={2}><path d="M0 2h4L2 0z" fill="#bbb"/></Svg></button>
          <button aria-label="Вниз"><Caret/></button>
          <button aria-label="Все стили"><CustomizeIcon/></button>
        </GalleryScroll>
      </Gallery>
    </GroupBody>
    <Footer name="Стили"/>
  </Group>
)

const EditingGroup = () => (
  <Group $width={62}>
    <GroupBody>
      <CommandList>
        <Command><FindIcon/>Найти <Caret/></Command>
        <Command><ReplaceIcon/>Заменить</Command>
        <Command><CursorIcon/>Выделить<Caret/></Command>
      </CommandList>
    </GroupBody>
    <Footer name="Редактирование" plain/>
  </Group>
)

const RibbonEnd = styled.div`
  display: flex;
  align-items: flex-end;
  justify-content: flex-end;
  width: 59px;
  padding: 0 6px 1px 0;
`

const Mini = () => (
  <MiniToolbar role="toolbar">
    <MiniTools>
      <ToolRow>
        <FontPicker width={59} sizeWidth={27}/>
        <Tool aria-label="Увеличить"><GrowIcon/></Tool>
        <Tool aria-label="Уменьшить"><GrowIcon down/></Tool>
        <Tool aria-label="Формат по образцу"><BrushIcon/></Tool>
      </ToolRow>
      <ToolRow>
        <Tool $bold>Ж</Tool>
        <Tool $bold $italic>К</Tool>
        <Tool $bold $underline>Ч</Tool>
        <Tool><Bar color="#fff200" $small>ab</Bar></Tool><DropButton label="Цвет выделения"/>
        <Tool><Bar color="#f00">А</Bar></Tool><DropButton label="Цвет текста"/>
        <Tool aria-label="Маркеры"><ListIcon/></Tool><DropButton label="Вид маркеров"/>
        <Tool aria-label="Нумерация"><ListIcon kind="number"/></Tool><DropButton label="Вид нумерации"/>
      </ToolRow>
    </MiniTools>
    <MiniStyles><StylesIcon/>Стили</MiniStyles>
  </MiniToolbar>
)

const OrderSheet = () => (
  <Sheet $top={47}>
    <Heading $height={52}>
      {ORDER_TITLE.map(line => <Line key={line} $marked>{line}</Line>)}
    </Heading>
    <Block $height={9}><HeadingTail/></Block>
    <Dated $height={17}><Line $marked>{"6 июня 2016 "}</Line></Dated>
    <Block $height={382}>
      {ORDER_SELECTED.map(line => <Line key={line} $marked>{line}</Line>)}
      {ORDER_REST.map(line => <Line key={line}>{line}</Line>)}
    </Block>
    <Mini/>
  </Sheet>
)

const RulesSheet = () => (
  <Sheet $top={48}>
    <Signature $height={11}><Line>{"Министр        Д.В. Ливанов"}</Line></Signature>
    <Block $height={23} $after={11}>
      <Line>Зарегистрировано в Минюсте РФ 1 июня 2016 г.</Line>
      <Line>Регистрационный № 42388</Line>
    </Block>
    <Block $height={11} $after={11}><Line>Приложение</Line></Block>
    <Heading $height={75} $after={11}>
      <Line>Особенности</Line>
      <Line>режима рабочего времени и времени отдыха педагогических и иных</Line>
      <Line>работников организаций, осуществляющих образовательную</Line>
      <Line><Grammar>{"деятельность  "}</Grammar></Line>
      <Line><Grammar>(</Grammar>утв. приказом Министерства образования и науки РФ от 11 мая 2016 г.</Line>
      <Line>№ 536)</Line>
    </Heading>
    <Heading $height={12} $after={10}><Line>I. Общие положения</Line></Heading>
    {RULES.map(rule => (
      <Block key={rule.lines[0]} $height={rule.height} $after={11}>
        {rule.lines.map(line => <Line key={line}>{line}</Line>)}
      </Block>
    ))}
  </Sheet>
)

const App = () => (
  <Window>
    <GlobalStyle/>
    <TitleBar>
      <QuickAccess>
        <QuickButton aria-label="Word"><WordIcon/></QuickButton>
        <QuickButton aria-label="Сохранить"><SaveIcon/></QuickButton>
        <QuickButton aria-label="Отменить"><UndoIcon/><Caret color="#bbb"/></QuickButton>
        <QuickButton aria-label="Повторить"><RedoIcon/></QuickButton>
        <QuickButton aria-label="Печать"><PrintIcon/></QuickButton>
        <QuickButton aria-label="Создать"><BlankIcon/></QuickButton>
        <QuickButton aria-label="Настройка панели"><CustomizeIcon/></QuickButton>
      </QuickAccess>
      <Title>Приказ Министерства образования и науки РФ от 11 мая 2016.docx - Word</Title>
      <WindowButtons>
        <WindowButton>?</WindowButton>
        <WindowButton aria-label="Параметры ленты"><RibbonOptionsIcon/></WindowButton>
        <WindowButton aria-label="Свернуть"><MinimizeIcon/></WindowButton>
        <WindowButton aria-label="Восстановить"><RestoreIcon/></WindowButton>
        <WindowButton aria-label="Закрыть"><CloseIcon/></WindowButton>
      </WindowButtons>
    </TitleBar>
    <TabBar>
      <FileTab>ФАЙЛ</FileTab>
      {TABS.map((tab, i) => <Tab key={tab} $active={i === 0}>{tab}</Tab>)}
      <Account>Учетная запись Майкрософт<Caret/><AvatarIcon/></Account>
    </TabBar>
    <Ribbon>
      <ClipboardGroup/>
      <FontGroup/>
      <ParagraphGroup/>
      <StylesGroup/>
      <EditingGroup/>
      <RibbonEnd><button aria-label="Свернуть ленту"><ChevronUpIcon color="#555"/></button></RibbonEnd>
    </Ribbon>
    <Canvas>
      <CanvasRow>
        <TabStop>L</TabStop>
        <Sheets>
          <HorizontalRuler>
            {rulerMarks(3, 18)}
            <Indent $at={70}><IndentMarker/></Indent>
            <Indent $at={460}><IndentMarker bottom/></Indent>
          </HorizontalRuler>
        </Sheets>
      </CanvasRow>
      <CanvasRow $grow>
        <VerticalRuler>{rulerMarks(2, 20, true)}</VerticalRuler>
        <Sheets $top={11}>
          <OrderSheet/>
          <RulesSheet/>
        </Sheets>
      </CanvasRow>
    </Canvas>
    <StatusBar>
      <StatusItem>СТРАНИЦА 1 ИЗ 10</StatusItem>
      <StatusItem>СЛОВО 380 ИЗ 3873</StatusItem>
      <StatusItem aria-label="Правописание"><ProofIcon/></StatusItem>
      <StatusItem>РУССКИЙ</StatusItem>
      <Views>
        <View aria-label="Режим чтения"><ReadIcon/></View>
        <View $active aria-label="Разметка страницы"><PrintViewIcon/></View>
        <View aria-label="Веб-документ"><WebViewIcon/></View>
      </Views>
      <Zoom>-<ZoomSlider type="range" min="0" max="200" defaultValue="100" aria-label="Масштаб"/>+</Zoom>
      <ZoomValue>100%</ZoomValue>
    </StatusBar>
    <Taskbar>
      <TaskIcon $width={30} aria-label="Пуск"><StartIcon/></TaskIcon>
      <SearchBox>
        <SearchIcon/>
        <SearchInput placeholder="Поиск" aria-label="Поиск"/>
        <GlobeIcon/>
      </SearchBox>
      <TaskIcon aria-label="Представление задач"><TaskViewIcon/></TaskIcon>
      <TaskIcon aria-label="Магазин"><StoreIcon/></TaskIcon>
      <TaskIcon aria-label="Проводник"><FolderIcon/></TaskIcon>
      <TaskIcon aria-label="Почта"><MailIcon/></TaskIcon>
      <TaskIcon aria-label="Калькулятор"><CalcIcon/></TaskIcon>
      <TaskIcon aria-label="Календарь"><CalendarIcon/></TaskIcon>
      <TaskIcon aria-label="Игры"><GiftIcon/></TaskIcon>
      <TaskIcon aria-label="Excel"><OfficeIcon color="#1f7244" glyph="M2.500 4l3.500 5M6 4L2.500 9"/></TaskIcon>
      <TaskButton><WordIcon/>Документ1 - Word</TaskButton>
      <TaskButton $active><WordIcon/>Приказ Министер...</TaskButton>
      <TaskIcon aria-label="PowerPoint"><OfficeIcon color="#d24726" glyph="M3.200 10V4h1.600c2 0 2 3 0 3H3.200"/></TaskIcon>
      <TaskIcon aria-label="Приложение"><LeafIcon/></TaskIcon>
      <TaskButton><YandexIcon/>Дзен-студия | Оче...</TaskButton>
      <TaskIcon aria-label="Edge"><EdgeIcon/></TaskIcon>
      <Tray>
        <TrayItem aria-label="Скрытые значки"><ChevronUpIcon/></TrayItem>
        <TrayItem aria-label="Собрание"><MeetIcon/></TrayItem>
        <TrayItem aria-label="OneDrive"><CloudIcon/></TrayItem>
        <TrayItem aria-label="Микрофон"><MicIcon/></TrayItem>
        <TrayItem aria-label="Сеть"><NetIcon/></TrayItem>
        <TrayItem aria-label="Звук"><VolumeIcon/></TrayItem>
        <TrayItem $width={22}>РУС</TrayItem>
        <Clock>21:48<br/>29.05.2023</Clock>
        <TrayItem $width={34} aria-label="Уведомления"><NoticeIcon/></TrayItem>
      </Tray>
    </Taskbar>
  </Window>
)

export default App;
